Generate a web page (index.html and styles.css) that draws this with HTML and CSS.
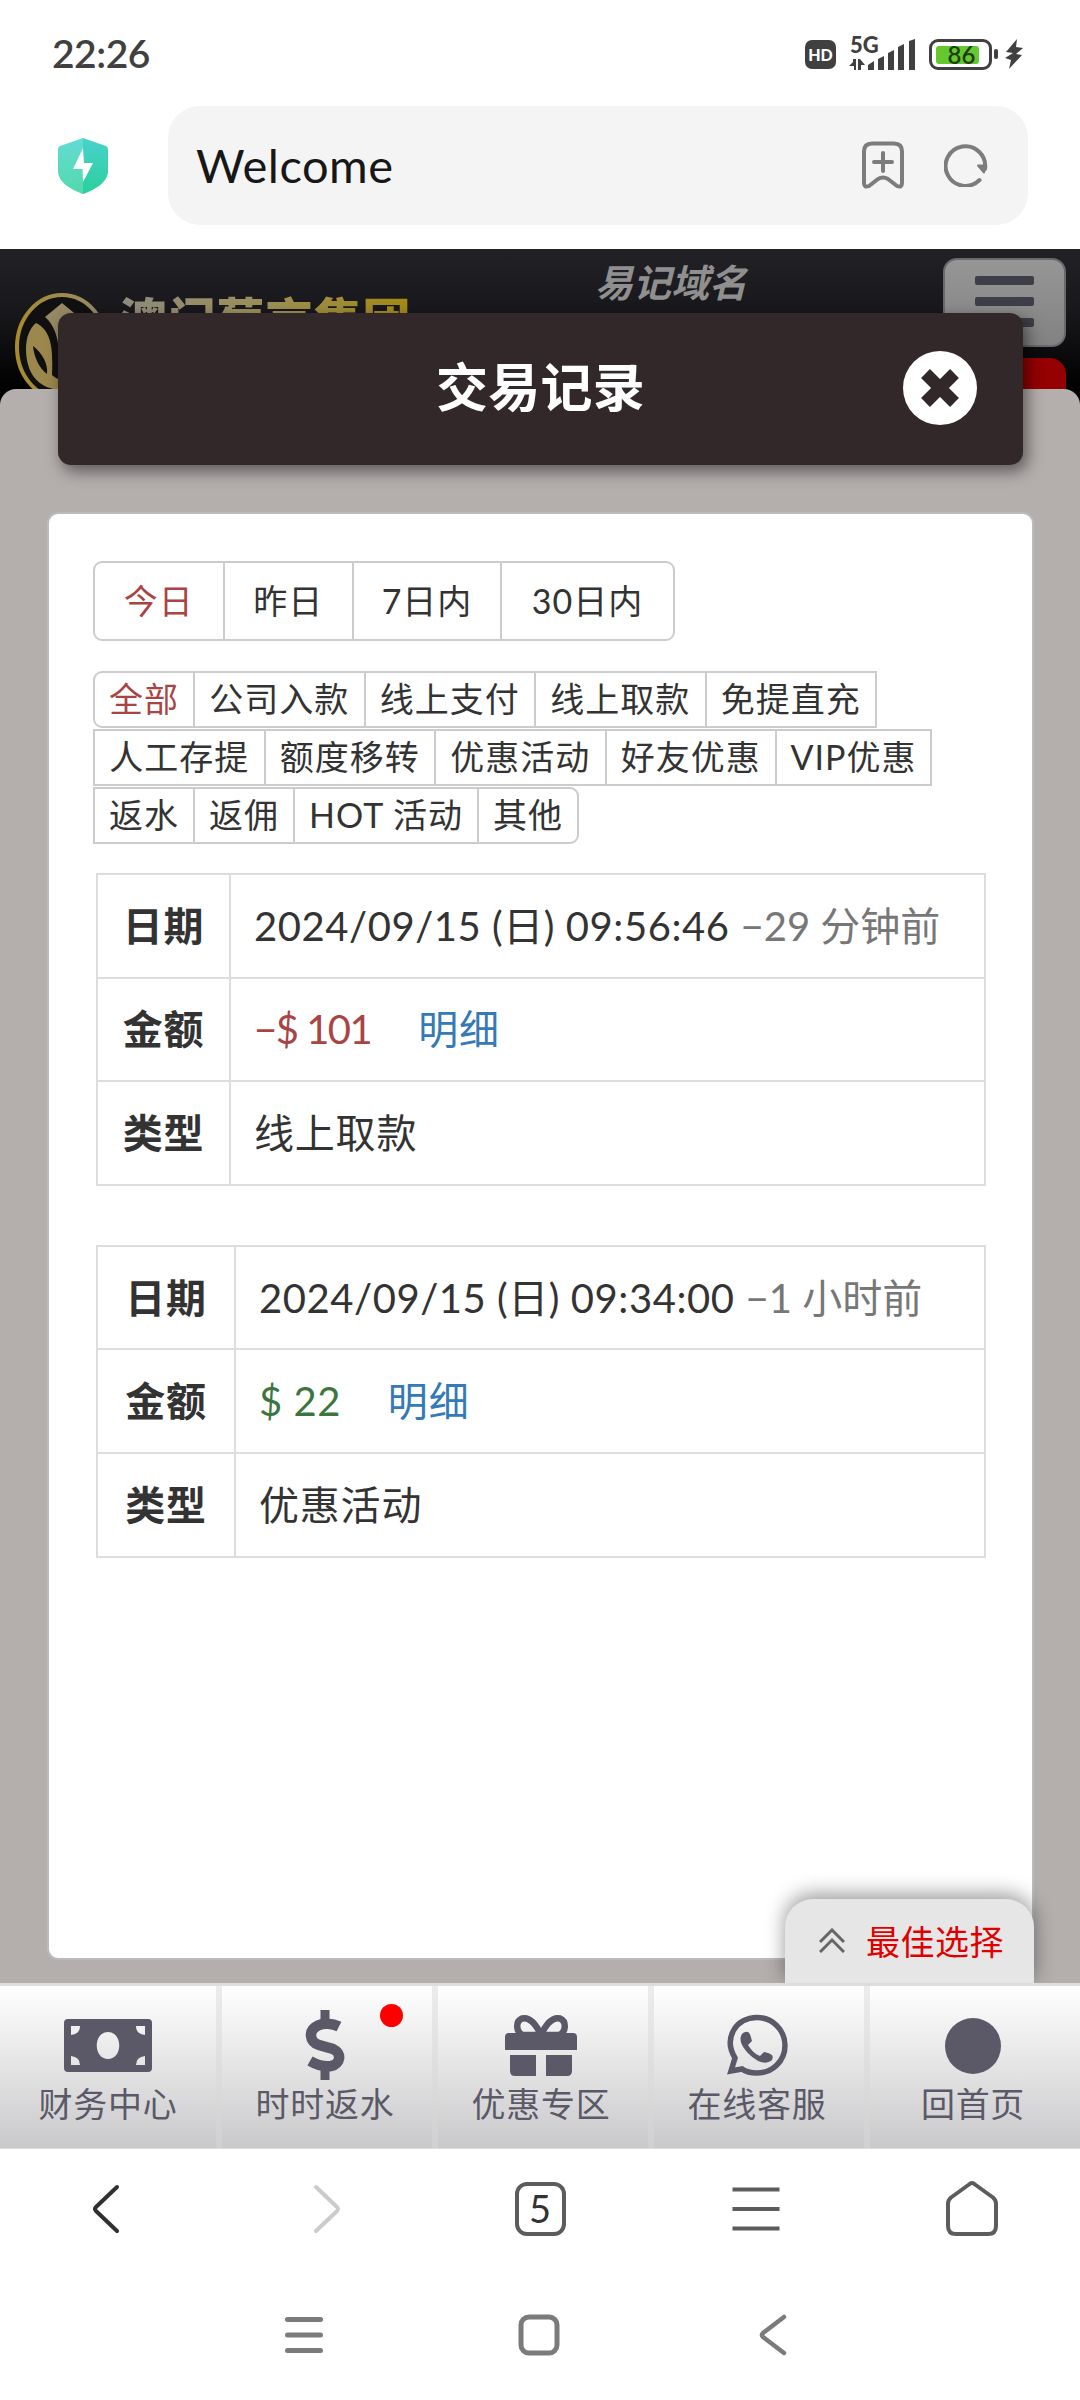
FILE: index.html
```html
<!DOCTYPE html>
<html lang="zh-CN">
<head>
    <meta charset="UTF-8">
    <meta name="viewport" content="width=device-width, initial-scale=1.0">
    <title>交易记录</title>
    <link rel="stylesheet" href="styles.css">
</head>
<body>
    <div class="status-bar">
        <span class="clock">22:26</span>
        <div class="status-icons">
            <span class="hd">HD</span>
            <div class="signal">
                <span class="net">5G</span>
                <svg width="66" height="32" viewBox="0 0 66 32" fill="#404040">
                    <path d="M4 21h3v11H5v-4H0l4-4zM9 21h2l5 6h-4v5H9z"/>
                    <path d="M19 27l6-4v9h-6zM29 21l6-3v14h-6zM39 15l6-3v20h-6zM49 9l6-3v26h-6zM60 3l6-2v31h-6z"/>
                </svg>
            </div>
            <div class="battery"><span>86</span></div>
            <svg class="bolt" width="18" height="30" viewBox="0 0 18 30" fill="#404040">
                <path d="M12 0L1 13l7 1-8 5 6 2-2 9 13-14-6-1 7-6-7-1z"/>
            </svg>
        </div>
    </div>

    <div class="address-bar">
        <svg class="shield" width="50" height="56" viewBox="0 0 50 56">
            <defs>
                <linearGradient id="shieldLeft" x1="0" y1="0" x2="0" y2="1"><stop offset="0" stop-color="#62dcd4"/><stop offset="1" stop-color="#54d9ad"/></linearGradient>
                <linearGradient id="shieldRight" x1="0" y1="0" x2="0" y2="1"><stop offset="0" stop-color="#48d2cb"/><stop offset="1" stop-color="#2bcf9d"/></linearGradient>
            </defs>
            <path d="M25 0L2 8Q0 9 0 11v22c0 11 13 19 25 23z" fill="url(#shieldLeft)"/>
            <path d="M25 0l23 8q2 1 2 3v22c0 11-13 19-25 23z" fill="url(#shieldRight)"/>
            <path d="M25 10L15 31h9.500L25 44l10-19h-9z" fill="#fff"/>
        </svg>
        <div class="address">
            <span class="address-text">Welcome</span>
            <svg width="42" height="48" viewBox="0 0 42 48" fill="none" stroke="#7c7c7c" stroke-width="4" stroke-linecap="round" stroke-linejoin="round">
                <path d="M10 2.500h22q8 0 8 8V42q0 5-5 3l-9-7q-5-3-10 0l-9 7q-5 2-5-3V10.500q0-8 8-8z"/>
                <path d="M21 12v18M12 21h18"/>
            </svg>
            <svg width="44" height="44" viewBox="0 0 44 44" fill="none" stroke="#7c7c7c" stroke-width="4" stroke-linecap="round">
                <path d="M35.500 37A19.800 19.800 0 1 1 41 26"/>
                <path d="M34 22.500h8l-2 7z" fill="#7c7c7c" stroke-width="2" stroke-linejoin="round"/>
            </svg>
        </div>
    </div>

    <div class="site">
        <header class="site-header">
            <div class="logo">
                <svg width="96" height="108" viewBox="0 0 96 108">
                    <defs>
                        <linearGradient id="gold" x1="0" y1="0" x2="1" y2="0"><stop offset="0" stop-color="#a78b2d"/><stop offset="1" stop-color="#938b70"/></linearGradient>
                    </defs>
                    <ellipse cx="48" cy="54" rx="45" ry="52" fill="#101010" stroke="url(#gold)" stroke-width="4"/>
                    <path d="M22 30c16 8 17 26 16 52 4 4 8 5 14 5v10C24 98 12 80 12 56c0-12 4-21 10-26z" fill="#9c884c"/>
                    <path d="M19 53c10 8 15 18 14 28-8-6-13-17-14-28z" fill="#101010"/>
                    <path d="M48 10l17 14q-10 10-12 34h-8q-2-24-14-34z" fill="#978964"/>
                </svg>
                <span class="logo-name">澳门葡京集团</span>
            </div>
            <span class="domain">易记域名</span>
            <div class="header-menu">
                <div class="menu-button"><i></i><i></i><i></i></div>
                <div class="red-tab"></div>
            </div>
        </header>

        <div class="modal-header">
            <h1>交易记录</h1>
            <svg class="close" width="74" height="74" viewBox="0 0 74 74">
                <circle cx="37" cy="37" r="37" fill="#fff"/>
                <path d="M22.500 22.500l29 29M51.500 22.500l-29 29" stroke="#322829" stroke-width="12.500"/>
            </svg>
        </div>

        <main class="sheet">
            <div class="card">
                <div class="tabs">
                    <span class="tab active">今日</span>
                    <span class="tab">昨日</span>
                    <span class="tab seven">7日内</span>
                    <span class="tab thirty">30日内</span>
                </div>

                <div class="filters">
                    <div class="filter-row">
                        <span class="active">全部</span><span>公司入款</span><span>线上支付</span><span>线上取款</span><span>免提直充</span>
                    </div>
                    <div class="filter-row">
                        <span>人工存提</span><span>额度移转</span><span>优惠活动</span><span>好友优惠</span><span class="vip">VIP优惠</span>
                    </div>
                    <div class="filter-row">
                        <span>返水</span><span>返佣</span><span class="hot">HOT 活动</span><span>其他</span>
                    </div>
                </div>

                <table class="record">
                    <tr>
                        <th>日期</th>
                        <td><span class="date">2024/09/15 (日) 09:56:46</span> <span class="ago">−29 分钟前</span></td>
                    </tr>
                    <tr>
                        <th>金额</th>
                        <td><span class="amount minus">−$ 101</span><a class="detail">明细</a></td>
                    </tr>
                    <tr>
                        <th>类型</th>
                        <td>线上取款</td>
                    </tr>
                </table>

                <table class="record second">
                    <tr>
                        <th>日期</th>
                        <td><span class="date">2024/09/15 (日) 09:34:00</span> <span class="ago">−1 小时前</span></td>
                    </tr>
                    <tr>
                        <th>金额</th>
                        <td><span class="amount plus">$ 22</span><a class="detail">明细</a></td>
                    </tr>
                    <tr>
                        <th>类型</th>
                        <td>优惠活动</td>
                    </tr>
                </table>
            </div>
        </main>

        <div class="best-choice">
            <svg width="26" height="25" viewBox="0 0 26 25" fill="none" stroke="#666" stroke-width="3">
                <path d="M1 14L13 2l12 12M1 24l12-12 12 12"/>
            </svg>
            <span>最佳选择</span>
        </div>

        <nav class="site-nav">
            <a>
                <svg width="88" height="70" viewBox="0 0 88 70">
                    <path fill-rule="evenodd" d="M4 9h80q4 0 4 4v45q0 4-4 4H4q-4 0-4-4V13q0-4 4-4zM7 16v9q9-1 9-9zM81 16h-9q0 8 9 9zM7 55h9q0-8-9-9zM81 55v-9q-9 1-9 9zM44 22c-15 0-15 27 0 27s15-27 0-27z"/>
                </svg>
                <span>财务中心</span>
            </a>
            <a>
                <svg width="40" height="70" viewBox="0 0 40 70" fill="none" stroke="#5b5967">
                    <path d="M20 0v14M20 58v12" stroke-width="9"/>
                    <path d="M34 16.500C27 13 18 13 13 15.500C3 20 4 32 14 35l14 4c9 4 8 15-2 17-8 1-14-1-21-5" stroke-width="10.500"/>
                </svg>
                <span>时时返水</span>
                <i class="dot"></i>
            </a>
            <a>
                <svg width="72" height="70" viewBox="0 0 72 70">
                    <path d="M4 23h64q4 0 4 4v13H0V27q0-4 4-4zM5 45h26v21H10q-5 0-5-5zM41 45h26v16q0 5-5 5H41z"/>
                    <path d="M36 25C30 12 23 7 17 8.500c-7 3-6 14 1 16.500zM36 25C42 12 49 7 55 8.500c7 3 6 14-1 16.500z" fill="none" stroke="#5b5967" stroke-width="6.500"/>
                </svg>
                <span>优惠专区</span>
            </a>
            <a>
                <svg width="62" height="70" viewBox="0 0 62 70">
                    <path d="M5 61l4-13C-3 28 10 7.500 31 7.500c15 0 28 12 28 28S46 63 31 63c-6 0-11-1-15-4z" fill="none" stroke="#5b5967" stroke-width="5.500"/>
                    <path d="M17 23c6-3 7 0 9 8l-4 4c3 5 7 9 12 11l4-4c8 2 10 3 8 8-7 6-16 1-23-6-6-6-12-15-6-21z"/>
                </svg>
                <span>在线客服</span>
            </a>
            <a>
                <svg width="56" height="70" viewBox="0 0 56 70"><circle cx="28" cy="36" r="28"/></svg>
                <span>回首页</span>
            </a>
        </nav>
    </div>

    <div class="browser-nav">
        <svg width="56" height="56" viewBox="0 0 56 56" fill="none" stroke="#303030" stroke-width="4" stroke-linecap="round" stroke-linejoin="round"><path d="M36 6L15 26q-2 2 0 4l21 20"/></svg>
        <svg width="56" height="56" viewBox="0 0 56 56" fill="none" stroke="#cbcbcb" stroke-width="4" stroke-linecap="round" stroke-linejoin="round"><path d="M18 6l21 20q2 2 0 4L18 50"/></svg>
        <div class="tab-count">5</div>
        <svg width="56" height="56" viewBox="0 0 56 56" stroke="#5c5c5c" stroke-width="4"><path d="M5.500 8.500h47M5.500 28h47M5.500 47.500h47"/></svg>
        <svg width="56" height="56" viewBox="0 0 56 56" fill="none" stroke="#5c5c5c" stroke-width="4" stroke-linejoin="round"><path d="M25 3.500q3-3 6 0l18 13q3 2.500 3 6V45q0 8-8 8H12q-8 0-8-8V22.500q0-3.500 3-6z"/></svg>
    </div>

    <div class="system-nav">
        <svg width="42" height="42" viewBox="0 0 42 42" stroke="#7b7b7b" stroke-width="5" stroke-linecap="round"><path d="M4.500 5.500h33M4.500 21h33M4.500 36.500h33"/></svg>
        <svg width="42" height="42" viewBox="0 0 42 42" fill="none" stroke="#7b7b7b" stroke-width="5"><rect x="3" y="3" width="36" height="36" rx="8"/></svg>
        <svg width="42" height="42" viewBox="0 0 42 42" fill="none" stroke="#7b7b7b" stroke-width="4.500" stroke-linecap="round" stroke-linejoin="round"><path d="M31 3L10 19q-2 2 0 4l21 16"/></svg>
    </div>
</body>
</html>
```

FILE: styles.css
```css
* {
    box-sizing: border-box;
}

body {
    margin: 0;
    width: 1080px;
    height: 2400px;
    display: flex;
    flex-direction: column;
    overflow: hidden;
    background: #fff;
    color: #333;
    font-family: Lato, 'Noto Sans CJK SC', sans-serif;
    font-size: 34px;
}

svg {
    display: block;
    flex-shrink: 0;
}

/* phone status bar */
.status-bar {
    height: 106px;
    padding: 0 57px 0 52px;
    display: flex;
    justify-content: space-between;
    align-items: center;
}

.clock {
    font-size: 39px;
    font-weight: 600;
    letter-spacing: -0.5px;
    color: #404040;
}

.status-icons {
    display: flex;
    align-items: center;
    height: 34px;
    margin-top: 2px;
}

.hd {
    width: 31px;
    height: 29px;
    margin-right: 13px;
    border-radius: 7px;
    background: #404040;
    color: #fff;
    font: 900 16px/29px Lato, sans-serif;
    text-align: center;
}

.signal {
    position: relative;
    margin-right: 14px;
}

.net {
    position: absolute;
    left: 1px;
    top: -4px;
    font-size: 22px;
    line-height: 22px;
    font-weight: 900;
    color: #404040;
}

.battery {
    position: relative;
    width: 63px;
    height: 31px;
    padding: 4px;
    border: 3px solid #404040;
    border-radius: 9px;
    margin-right: 13px;
}

.battery span {
    display: block;
    width: 43px;
    height: 18px;
    border-radius: 3px;
    background: #66c82f;
    color: #1d3d0c;
    font-size: 24px;
    line-height: 18px;
    font-weight: 600;
    text-align: center;
    padding-left: 8px;
}

.battery::after {
    content: '';
    position: absolute;
    right: -9px;
    top: 7px;
    width: 4px;
    height: 10px;
    border-radius: 2px;
    background: #404040;
}

/* address bar */
.address-bar {
    height: 143px;
    padding: 0 52px 0 58px;
    display: flex;
    align-items: flex-start;
}

.shield {
    margin-top: 32px;
}

.address {
    flex: 1;
    height: 119px;
    margin-left: 60px;
    padding: 0 40px 2px 28px;
    display: flex;
    align-items: center;
    gap: 40px;
    border-radius: 32px;
    background: #f4f4f4;
}

.address-text {
    flex: 1;
    font-size: 47px;
    letter-spacing: 0.5px;
    color: #171717;
}

/* web page */
.site {
    position: relative;
    height: 1900px;
    display: flex;
    flex-direction: column;
    background: #000;
}

.site-header {
    height: 140px;
    padding: 9px 14px 0;
    display: flex;
    align-items: flex-start;
    overflow: hidden;
    background: linear-gradient(#222226, #18181c 45%, #000);
}

.logo {
    display: flex;
    width: 581px;
    padding-top: 35px;
}

.logo-name {
    margin-left: 9px;
    font-size: 48px;
    line-height: 54px;
    font-weight: 900;
    letter-spacing: 0.7px;
    background: linear-gradient(90deg, #8f8c7e, #9c9058 50%, #a58a14);
    background-clip: text;
    color: transparent;
}

.domain {
    font-size: 38px;
    line-height: 49px;
    font-weight: bold;
    font-style: italic;
    color: #8f8f8f;
}

.header-menu {
    margin-left: auto;
}

.menu-button {
    width: 123px;
    height: 89px;
    padding: 16px 30px;
    border: 2px solid #69696c;
    border-radius: 14px;
    background: linear-gradient(#969696, #828282);
}

.menu-button i {
    display: block;
    width: 59px;
    height: 9px;
    margin-bottom: 12px;
    border-radius: 2px;
    background: #3e3e48;
}

.red-tab {
    height: 40px;
    margin-top: 11px;
    border-radius: 16px 16px 0 0;
    background: #950000;
}

.modal-header {
    position: absolute;
    left: 58px;
    top: 64px;
    width: 965px;
    height: 152px;
    border-radius: 13px;
    background: #322829;
    box-shadow: 4px 6px 16px rgba(0, 0, 0, 0.5);
}

.modal-header h1 {
    margin: 0;
    font-size: 52px;
    line-height: 149px;
    letter-spacing: 0.3px;
    text-align: center;
    color: #fff;
}

.close {
    position: absolute;
    right: 46px;
    top: 38px;
}

.sheet {
    flex: 1;
    padding: 123px 46px 0 47px;
    border-radius: 16px 16px 0 0;
    background: #b4aead;
}

.card {
    height: 1448px;
    padding: 47px 45px;
    border: 2px solid #bbb;
    border-radius: 11px;
    background: #fff;
}

.tabs {
    display: flex;
    width: fit-content;
    height: 80px;
    line-height: 76px;
    border: 2px solid #ccc;
    border-radius: 9px;
    letter-spacing: 1px;
    margin-left: -1px;
}

.tab {
    width: 129.500px;
    text-align: center;
    border-right: 2px solid #ccc;
}

.tab.seven {
    width: 148px;
}

.tab.thirty {
    width: 171px;
    border-right: 0;
}

.active {
    color: #a94442;
}

.filters {
    display: flex;
    flex-direction: column;
    gap: 1px;
    margin: 30px 0 29px -1px;
}

.filter-row {
    display: flex;
}

.filter-row span {
    width: 172.500px;
    height: 57px;
    margin-right: -2px;
    border: 2px solid #ccc;
    line-height: 52px;
    letter-spacing: 1px;
    text-align: center;
    white-space: nowrap;
}

.filter-row span.active,
.filter-row:last-child span {
    width: 102px;
}

.filter-row span.active {
    border-radius: 9px 0 0 9px;
}

.filter-row span.vip {
    width: 157px;
}

.filter-row:last-child span.hot {
    width: 186px;
}

.filter-row:last-child span:last-child {
    border-radius: 0 9px 9px 0;
}

/* records */
.record {
    width: 890px;
    margin: 0 0 59px 2px;
    border-collapse: collapse;
    table-layout: fixed;
    font-size: 40px;
    letter-spacing: 0.8px;
}

.record th,
.record td {
    height: 103.600px;
    padding: 0;
    border: 2px solid #ddd;
    line-height: 60px;
    white-space: nowrap;
}

.record th {
    width: 133px;
}

.record.second th {
    width: 138px;
}

.record td {
    padding-left: 23px;
    text-align: left;
}

.date {
    letter-spacing: 0.55px;
}

.ago {
    letter-spacing: 0;
    color: #777;
}

.minus {
    letter-spacing: -1.5px;
    color: #a94442;
}

.plus {
    letter-spacing: 0.5px;
    color: #3c763d;
}

.detail {
    margin-left: 47px;
    color: #337ab7;
}

/* floating tab above the bottom menu */
.best-choice {
    position: absolute;
    left: 785px;
    bottom: 165px;
    width: 249px;
    height: 85px;
    padding: 0 30px 3px 34px;
    display: flex;
    align-items: center;
    justify-content: space-between;
    border-radius: 28px 28px 0 0;
    background: #e6e6e6;
    box-shadow: 0 -5px 20px rgba(0, 0, 0, 0.4);
    color: #e00000;
    letter-spacing: 0.5px;
}

.site-nav {
    position: relative;
    height: 166px;
    display: flex;
    border-top: 3px solid #ddd;
    border-bottom: 1px solid #ddd;
    background: linear-gradient(#ececec, #d0d0d0);
}

.site-nav a {
    position: relative;
    width: 210px;
    margin-left: 6px;
    padding-top: 24px;
    display: flex;
    flex-direction: column;
    align-items: center;
    background: linear-gradient(#fff, #c9c9cb);
    color: #5b5967;
    fill: #5b5967;
    line-height: 48px;
}

.site-nav a:first-child {
    width: 216px;
    margin-left: 0;
}

.site-nav a:not(:first-child) svg,
.site-nav a:not(:first-child) span {
    margin-left: -4px;
}

.site-nav span {
    letter-spacing: 0.7px;
}

.dot {
    position: absolute;
    left: 158px;
    top: 18px;
    width: 23px;
    height: 23px;
    border-radius: 50%;
    background: #f00;
}

/* browser toolbar */
.browser-nav {
    height: 118px;
    display: flex;
    align-items: center;
    justify-content: space-around;
    padding-top: 1px;
}

.tab-count {
    width: 51px;
    height: 54px;
    border: 4px solid #5c5c5c;
    border-radius: 12px;
    font-size: 38px;
    line-height: 45px;
    text-align: center;
}

.system-nav {
    height: 133px;
    padding: 47px 285px 0 283px;
    display: flex;
    justify-content: space-between;
}
```
